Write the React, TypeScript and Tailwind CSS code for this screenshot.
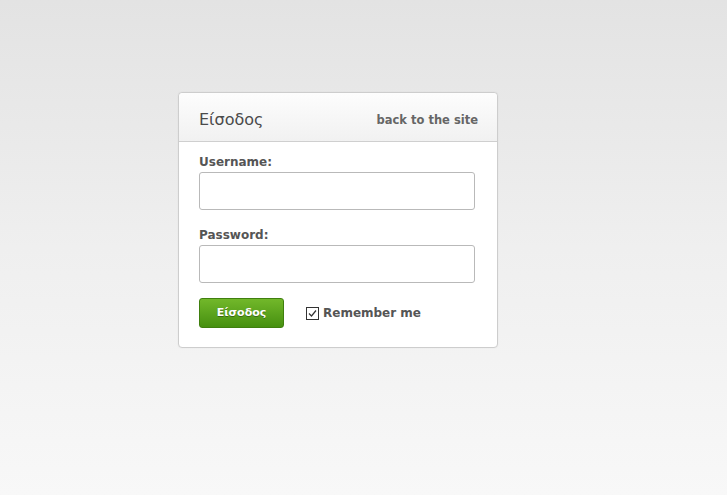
import React from "react";

const App: React.FC = () => {
  return (
    <div
      className="min-h-[495px] w-full bg-gradient-to-b from-[#e3e3e3] via-[#efefef] to-[#f8f8f8] pt-[92px]"
      style={{ fontFamily: '"DejaVu Sans", Verdana, sans-serif' }}
    >
      <div className="ml-[178px] w-[320px] rounded-[4px] border border-[#cdcdcd] bg-white shadow-[0_0_2px_rgba(0,0,0,0.05)]">
        <div className="flex h-[49px] items-center justify-between rounded-t-[4px] border-b border-[#cfcfcf] bg-gradient-to-b from-[#fdfdfd] to-[#f1f1f1] pl-[20px] pr-[19px] pt-[5px]">
          <h1 className="text-[16px] text-[#4a4a4a]">Είσοδος</h1>
          <a href="#" className="pt-[3px] text-[11.5px] font-bold text-[#666]">
            back to the site
          </a>
        </div>
        <form className="px-[20px] pb-[19px] pt-[12px]">
          <label className="block text-[12px] font-bold leading-[16px] text-[#555]">Username:</label>
          <input
            type="text"
            className="mt-[2px] block h-[38px] w-[276px] rounded-[3px] border border-[#b9b9b9] bg-white"
          />
          <label className="mt-[17px] block text-[12px] font-bold leading-[16px] text-[#555]">Password:</label>
          <input
            type="password"
            className="mt-[2px] block h-[38px] w-[276px] rounded-[3px] border border-[#b9b9b9] bg-white"
          />
          <div className="mt-[15px] flex items-center">
            <button
              type="button"
              className="h-[30px] w-[85px] rounded-[3px] border border-[#3f7f0e] bg-gradient-to-b from-[#72b82a] to-[#46900f] text-[11px] font-semibold text-white [text-shadow:0_1px_0_rgba(0,0,0,0.35)]"
            >
              Είσοδος
            </button>
            <label className="ml-[22px] flex items-center text-[12px] font-bold text-[#555]">
              <span className="flex h-[13px] w-[13px] items-center justify-center border border-[#333] bg-white">
                <svg width="11" height="11" viewBox="0 0 11 11">
                  <path d="M2 5.5 L4.5 8 L9 2.5" fill="none" stroke="#333" strokeWidth="1.2" />
                </svg>
              </span>
              <span className="ml-[4px]">Remember me</span>
            </label>
          </div>
        </form>
      </div>
    </div>
  );
};

export default App;
